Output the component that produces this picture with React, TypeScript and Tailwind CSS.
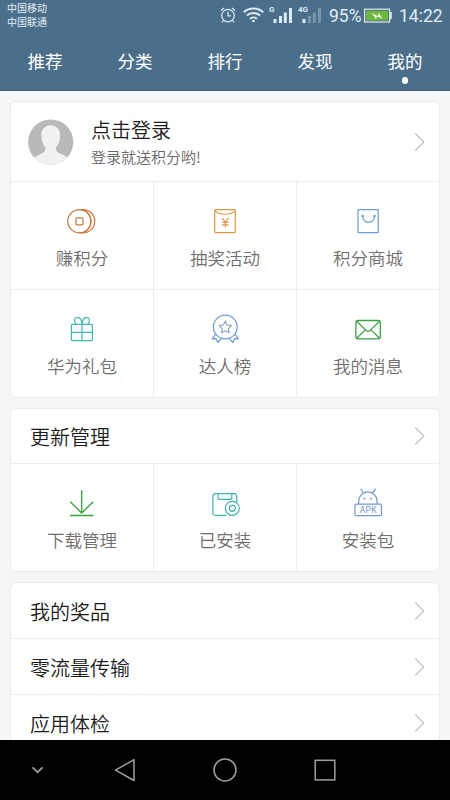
import type { ReactNode } from "react";

type ItemType = { label: string; icon: ReactNode };

const svgProps = {
  width: 32,
  height: 32,
  viewBox: "0 0 32 32",
  fill: "none",
  strokeWidth: 1.2,
  strokeLinejoin: "round" as const,
};

function CoinIcon() {
  return (
    <svg {...svgProps} stroke="#c9773f">
      <circle cx="13.4" cy="15.2" r="11.6" />
      <path d="M13.4 3.6h3.800a11.600 11.600 0 0 1 0 23.200h-3.800M17.800 4.200c9.200 4 9.200 18 0 22" />
      <rect x="10" y="11.8" width="7" height="7" rx="1" />
    </svg>
  );
}

function PacketIcon() {
  return (
    <svg {...svgProps} stroke="#dd9a45">
      <rect x="5.7" y="3.6" width="20.6" height="23" rx="1" />
      <path d="M6 4.2c3 5.400 17 5.400 20 0" />
      <path d="M13 11.8l3.3 4.2 3.3-4.2M16.3 16v5.600M13 16.300h6.600M13 18.900h6.600" />
    </svg>
  );
}

function BagIcon() {
  return (
    <svg {...svgProps} stroke="#6f9fcc">
      <rect x="6" y="3.7" width="20.2" height="23" rx="0.6" />
      <path d="M10.6 10.2c.8 8 11.200 8 12 0" />
      <circle cx="10.6" cy="10" r="0.7" />
      <circle cx="22.5" cy="10" r="0.7" />
    </svg>
  );
}

function GiftIcon() {
  return (
    <svg {...svgProps} stroke="#45b5ad">
      <rect x="5.4" y="10.4" width="21" height="16.2" rx="1" />
      <path d="M5.4 18.4h21M16 10.4v16.2" />
      <path d="M16 10.2C15.500 5.500 13.500 3.200 11 3.400C8.300 3.700 7.700 7 9.900 10.200M16 10.200C16.500 5.500 18.500 3.200 21 3.400C23.700 3.700 24.300 7 22.100 10.200" />
    </svg>
  );
}

function MedalIcon() {
  return (
    <svg {...svgProps} stroke="#6d9bd3">
      <circle cx="16.3" cy="13" r="11.9" />
      <path d="M16.3 7.2l1.900 3.800 4.200.6-3 3 .7 4.200-3.800-2-3.800 2 .7-4.200-3-3 4.200-.6z" stroke="#8ba4c6" />
      <path d="M6.3 20.3l-3 4.500 3.700-.2 1.800 3.900 3.900-4.300M26.300 20.300l3 4.500-3.700-.2-1.800 3.900-3.900-4.300" />
    </svg>
  );
}

function MailIcon() {
  return (
    <svg {...svgProps} stroke="#3f9f45" strokeWidth={1.3}>
      <rect x="3.9" y="6.5" width="24.4" height="18.3" rx="2" />
      <path d="M4.700 7.200l9.300 9.200c1.200 1.100 3 1.100 4.200 0l9.300-9.200M4.700 24.200l8.500-8.300M27.500 24.200L19 15.900" />
    </svg>
  );
}

function DownloadIcon() {
  return (
    <svg {...svgProps} stroke="#36a336" strokeWidth={1.3} strokeLinejoin="miter">
      <path d="M15.700 2v23M4.200 13.700l11.500 11.300 11.500-11.300M4 27.500h23.400" />
    </svg>
  );
}

function InstalledIcon() {
  return (
    <svg {...svgProps} stroke="#3fb3ab">
      <path d="M17.500 27.300H6.200a2.300 2.300 0 0 1-2.300-2.300V8a2.300 2.300 0 0 1 2.300-2.300h19.300a2.300 2.300 0 0 1 2.300 2.300v6.500" />
      <path d="M9 5.700v4.600a1 1 0 0 0 1 1h11.800a1 1 0 0 0 1-1V5.700" />
      <circle cx="23.3" cy="20.3" r="7" />
      <circle cx="23.3" cy="20.3" r="3" />
    </svg>
  );
}

function ApkIcon() {
  return (
    <svg {...svgProps} stroke="#7397cf">
      <path d="M6.700 16v-2.600c0-5.400 4-9.600 9.200-9.600s9.200 4.200 9.200 9.600V16M11 4.800L8.900.7M20.800 4.800l2.800-4.100" />
      <circle cx="12.5" cy="10.7" r="0.7" fill="#7397cf" strokeWidth={0.6} />
      <circle cx="19" cy="10.7" r="0.7" fill="#7397cf" strokeWidth={0.6} />
      <rect x="2.9" y="16.2" width="26.6" height="11.5" rx="1.8" />
      <text
        x="16.2"
        y="25"
        fontSize="8.5"
        textAnchor="middle"
        textLength="17"
        fill="#7397cf"
        stroke="none"
        fontFamily="Roboto, sans-serif"
      >
        APK
      </text>
    </svg>
  );
}

function Chevron() {
  return (
    <svg width="12" height="20" viewBox="0 0 12 20" fill="none" stroke="#c2c2c2" strokeWidth="1.2">
      <path d="M1.200 1.500l8.700 8.500-8.700 8.500" />
    </svg>
  );
}

function Signal({ label, level }: { label: string; level: number }) {
  const bars = [
    { x: 4.5, y: 19, h: 4 },
    { x: 10, y: 16, h: 7 },
    { x: 14.8, y: 12.5, h: 10.5 },
    { x: 20, y: 8, h: 15 },
  ];
  return (
    <svg width="25" height="26" viewBox="0 0 25 26" fill="#dcebf5">
      <text x="0" y="11.5" fontSize="8" fontWeight="700" fontFamily="Roboto, sans-serif">
        {label}
      </text>
      {bars.map((bar, idx) => (
        <rect key={bar.x} x={bar.x} y={bar.y} width="3" height={bar.h} opacity={idx < level ? 1 : 0.3} />
      ))}
    </svg>
  );
}

function StatusBar() {
  return (
    <div className="flex h-8 justify-between pl-[7px] text-[#e1edf5]">
      <div className="pt-px text-[10px] leading-[13.5px]">
        <p>中国移动</p>
        <p>中国联通</p>
      </div>
      <div className="flex w-[230px] items-start font-[Roboto,sans-serif]">
        <svg className="mt-[7px]" width="16" height="16" viewBox="0 0 16 16" fill="none" stroke="#d5e7f3" strokeWidth="1.3">
          <circle cx="8" cy="8.6" r="6.3" />
          <path d="M8 4.800v4.100h3M.8 3.600L4 .9M15.200 3.600L12 .9M3.500 13.400l-1.600 1.900M12.500 13.400l1.600 1.900" />
        </svg>
        <svg className="ml-[7px] mt-[7px]" width="21" height="16" viewBox="0 0 21 16" fill="none" stroke="#dcebf5" strokeWidth="2">
          <path d="M.8 5.200c5.400-5 14-5 19.400 0M3.900 8.600c3.700-3.500 9.500-3.500 13.200 0M7 11.800c2-1.900 5-1.900 7 0" />
          <circle cx="10.5" cy="14" r="1.3" fill="#dcebf5" stroke="none" />
        </svg>
        <div className="ml-[5px] flex gap-[4px]">
          <Signal label="G" level={4} />
          <Signal label="4G" level={1} />
        </div>
        <span className="ml-[6px] w-[35px] whitespace-nowrap pt-[6px] text-[17.5px] leading-5">95%</span>
        <svg className="mt-[8px]" width="28" height="16" viewBox="0 0 28 16" fill="none">
          <rect x="0.6" y="1.2" width="25" height="12.8" stroke="#e3eee9" strokeWidth="1.2" />
          <rect x="2.1" y="2.7" width="22" height="9.8" fill="#6fb83f" />
          <rect x="26.2" y="4" width="1.6" height="7" fill="#e3eee9" />
          <path d="M7.500 5l6.500 3 .5-3.500L18.500 10.500l-5.500-2-1 2.800z" fill="#e9f7df" />
        </svg>
        <span className="ml-[7px] pt-[6px] text-[17.5px] leading-5">14:22</span>
      </div>
    </div>
  );
}

function Tabs() {
  const tabs = ["推荐", "分类", "排行", "发现", "我的"];
  return (
    <nav className="grid grid-cols-5 text-center text-[17.5px] leading-6 text-white">
      {tabs.map((tab) => (
        <div key={tab} className="flex flex-col items-center pt-[17px]">
          <span>{tab}</span>
          {tab === "我的" && <i className="mt-1 size-[6.5px] rounded-full bg-white" />}
        </div>
      ))}
    </nav>
  );
}

function Card({ children }: { children: ReactNode }) {
  return (
    <section className="shrink-0 overflow-hidden rounded-md border border-[#ebebeb] bg-white">{children}</section>
  );
}

function ItemGrid({ items }: { items: ItemType[] }) {
  return (
    <div className="grid grid-cols-[143px_143px_1fr]">
      {items.map((item, idx) => (
        <div
          key={item.label}
          className={`flex h-[108px] flex-col items-center gap-2 border-t border-[#ededed] pt-[24px] ${
            idx % 3 === 2 ? "" : "border-r"
          }`}
        >
          {item.icon}
          <span className="text-[17.5px] font-[350] leading-6 text-[#6f6f6f]">{item.label}</span>
        </div>
      ))}
    </div>
  );
}

function Row({ title }: { title: string }) {
  return (
    <div className="flex h-[54px] items-center justify-between pl-[19px] pr-[13px]">
      <h2 className="pt-[2px] text-[20px] font-[350] text-[#1c1c1c]">{title}</h2>
      <Chevron />
    </div>
  );
}

const account: ItemType[] = [
  { label: "赚积分", icon: <CoinIcon /> },
  { label: "抽奖活动", icon: <PacketIcon /> },
  { label: "积分商城", icon: <BagIcon /> },
  { label: "华为礼包", icon: <GiftIcon /> },
  { label: "达人榜", icon: <MedalIcon /> },
  { label: "我的消息", icon: <MailIcon /> },
];

const updates: ItemType[] = [
  { label: "下载管理", icon: <DownloadIcon /> },
  { label: "已安装", icon: <InstalledIcon /> },
  { label: "安装包", icon: <ApkIcon /> },
];

const links = ["我的奖品", "零流量传输", "应用体检"];

export default function App() {
  return (
    <div className="flex h-[800px] w-[450px] flex-col overflow-hidden bg-[#f6f6f6] font-['Noto_Sans_CJK_SC',sans-serif]">
      <header className="h-[91px] shrink-0 border-b border-[#445f7c] bg-[#4b6f8b]">
        <StatusBar />
        <Tabs />
      </header>

      <main className="flex min-h-0 flex-1 flex-col gap-[10px] overflow-hidden px-[10px] pt-[10px]">
        <Card>
          <div className="flex h-[79px] items-center pl-[17px] pr-[13px]">
            <svg width="46" height="46" viewBox="0 0 46 46">
              <clipPath id="avatar">
                <circle cx="22.7" cy="23" r="22.6" />
              </clipPath>
              <g clipPath="url(#avatar)">
                <rect width="46" height="46" fill="#b9b9b9" />
                <path
                  d="M21 6.500c1-1 2-.8 3 0c4.500.5 8 4 8 9c.5 5.500-1 9.500-4 13c0 3 .5 4.500 4 6c4 1.500 6.500 2.500 8.500 5V46H5v-6c2-2.500 5-4 8.500-5.500c3.500-1.500 4-3 4-6c-3-3.500-4.200-7.500-4.200-12.500c0-5 3-9 7.700-9.500z"
                  fill="#f1f1f1"
                />
              </g>
            </svg>
            <div className="ml-[17px] flex-1">
              <h1 className="text-[20px] font-[350] leading-[30px] text-[#1c1c1c]">点击登录</h1>
              <p className="text-[15px] font-[350] leading-6 text-[#666]">登录就送积分哟!</p>
            </div>
            <Chevron />
          </div>
          <ItemGrid items={account} />
        </Card>

        <Card>
          <Row title="更新管理" />
          <ItemGrid items={updates} />
        </Card>

        <Card>
          <div className="divide-y divide-[#ededed] *:h-14">
            {links.map((link) => (
              <Row key={link} title={link} />
            ))}
          </div>
        </Card>
      </main>

      <footer className="flex h-[60px] shrink-0 items-center bg-black pl-[30px]">
        <svg width="310" height="30" viewBox="0 0 310 30" fill="none" stroke="#a0a0a0" strokeWidth="1.5">
          <path d="M2.500 12.300l5 5 5-5" strokeWidth="1.7" />
          <path d="M104 4.700v20.800L85.500 15.200z" strokeLinejoin="round" />
          <circle cx="195" cy="15" r="11" />
          <rect x="285.2" y="5.3" width="19.6" height="19.6" />
        </svg>
      </footer>
    </div>
  );
}
